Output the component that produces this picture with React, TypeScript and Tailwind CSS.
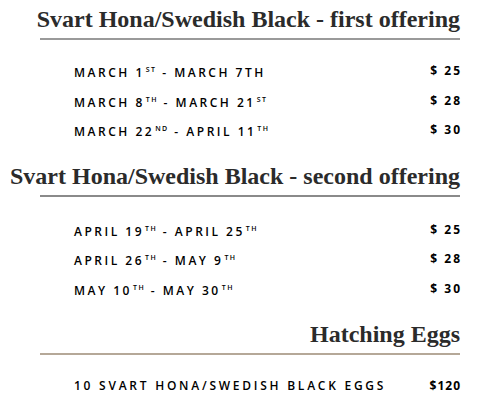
import React from "react";

interface Row {
  from: [string, string];
  to: [string, string];
  price: string;
}

const serif = "font-['Liberation_Serif',serif]";
const sans = "font-['Open_Sans',sans-serif]";

const first: Row[] = [
  { from: ["MARCH 1", "ST"], to: ["MARCH 7TH", ""], price: "$ 25" },
  { from: ["MARCH 8", "TH"], to: ["MARCH 21", "ST"], price: "$ 28" },
  { from: ["MARCH 22", "ND"], to: ["APRIL 11", "TH"], price: "$ 30" },
];

const second: Row[] = [
  { from: ["APRIL 19", "TH"], to: ["APRIL 25", "TH"], price: "$ 25" },
  { from: ["APRIL 26", "TH"], to: ["MAY 9", "TH"], price: "$ 28" },
  { from: ["MAY 10", "TH"], to: ["MAY 30", "TH"], price: "$ 30" },
];

const Date: React.FC<{ d: [string, string] }> = ({ d }) => (
  <>
    {d[0]}
    {d[1] && <sup className="text-[7px] tracking-[1.5px] ml-[1px] top-[-5px]">{d[1]}</sup>}
  </>
);

const Heading: React.FC<{ text: string; line: string }> = ({ text, line }) => (
  <div className={`flex justify-end border-b-2 ${line}`}>
    <h2
      className={`${serif} whitespace-nowrap text-[24px] leading-[30px] font-bold text-[#2b2b2b] pb-[4px]`}
    >
      {text}
    </h2>
  </div>
);

const Rows: React.FC<{ rows: Row[]; top: string }> = ({ rows, top }) => (
  <div className={`flex flex-col pl-[34px] ${top}`}>
    {rows.map((r, i) => (
      <div
        key={i}
        className={`${sans} flex justify-between items-center h-[29.5px] text-[12px] font-semibold leading-[18px] text-black`}
      >
        <span className="tracking-[2.5px] mt-[1px]">
          <Date d={r.from} /> - <Date d={r.to} />
        </span>
        <span className="font-bold tracking-[2px] mb-[3px] -mr-[2px]">{r.price}</span>
      </div>
    ))}
  </div>
);

export default function App() {
  return (
    <div className="w-[500px] h-[408px] bg-white px-10 pt-[4px] overflow-hidden">
      <Heading text="Svart Hona/Swedish Black - first offering" line="border-[#9a9a9a]" />
      <Rows rows={first} top="pt-[18px]" />
      <div className="mt-[14px]">
        <Heading text="Svart Hona/Swedish Black - second offering" line="border-[#8a8a8a]" />
      </div>
      <Rows rows={second} top="pt-[20px]" />
      <div className="mt-[14px]">
        <Heading text="Hatching Eggs" line="border-[#b5a898]" />
      </div>
      <div className="pt-[16px] pl-[34px]">
        <div
          className={`${sans} flex justify-between items-center h-[29.5px] text-[12px] font-semibold leading-[18px] text-black`}
        >
          <span className="tracking-[2.75px]">10 SVART HONA/SWEDISH BLACK EGGS</span>
          <span className="font-bold tracking-[1px] -mr-[1px]">$120</span>
        </div>
      </div>
    </div>
  );
}
